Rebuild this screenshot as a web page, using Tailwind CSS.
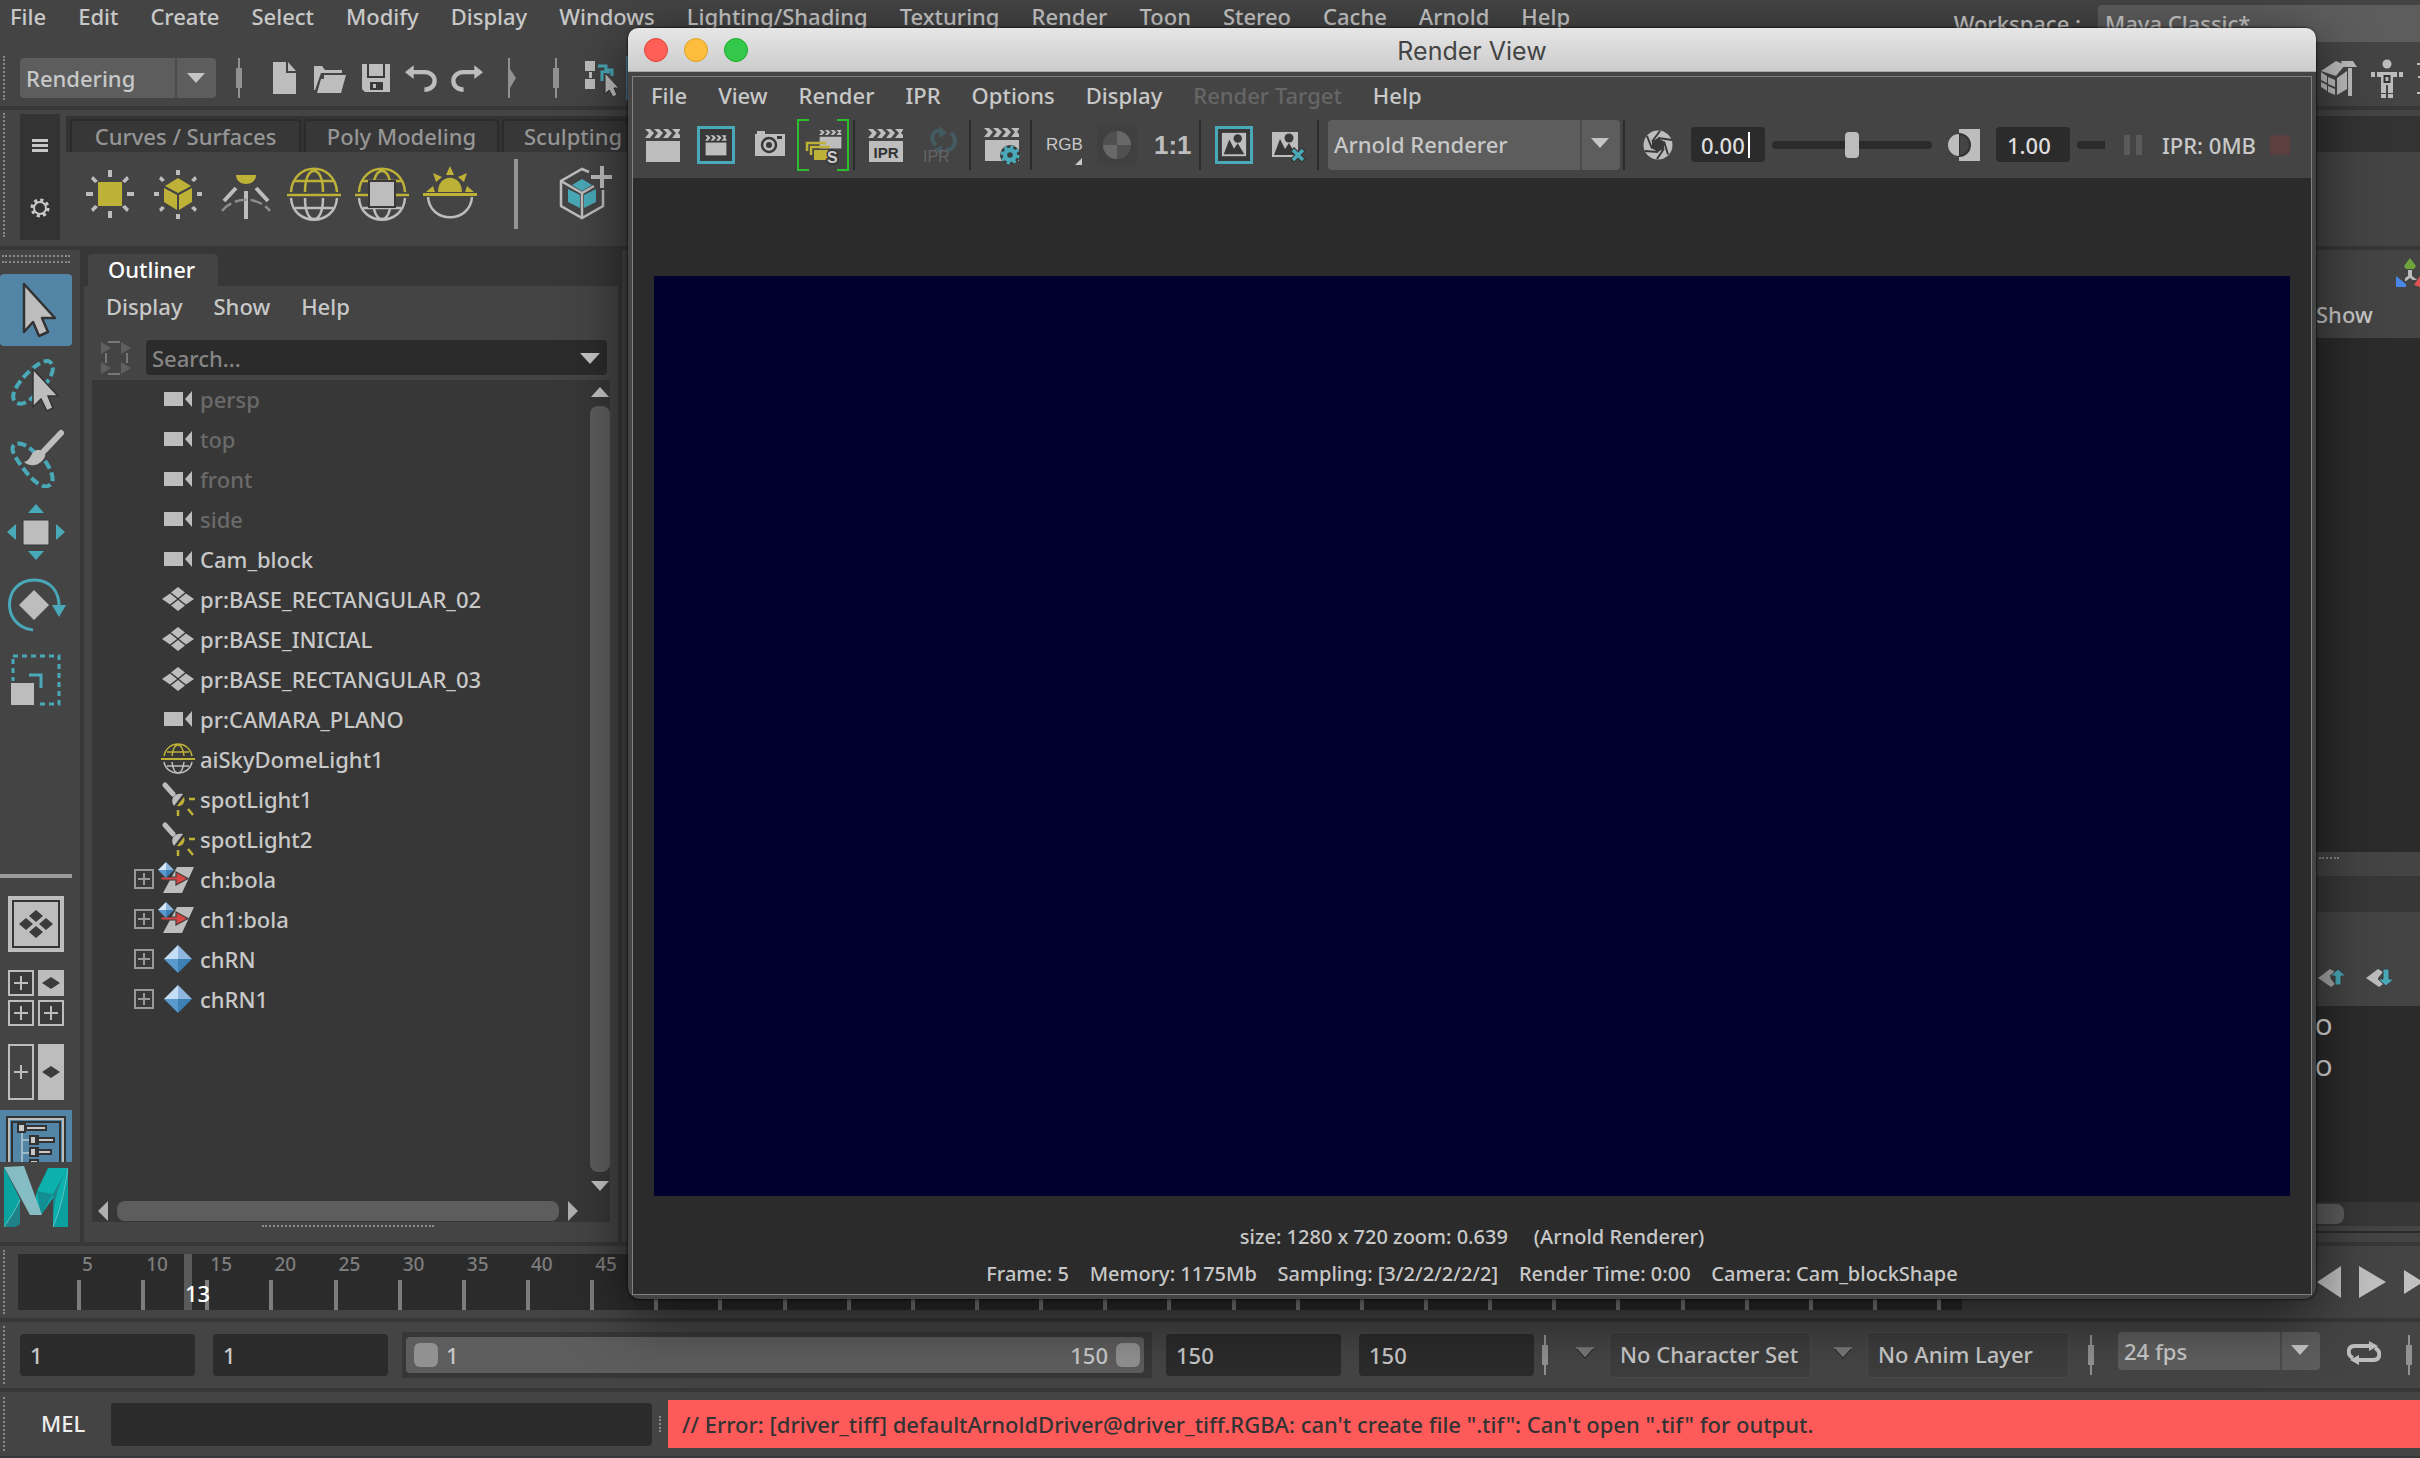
<!DOCTYPE html>
<html lang="en">
<head>
    <meta charset="UTF-8">
    <meta name="viewport" content="width=device-width, initial-scale=1.0">
    <title>Maya - Render View</title>
    <script src="https://cdn.jsdelivr.net/npm/@tailwindcss/browser@4"></script>
</head>
<body class="bg-[#444444] text-[#c8c8c8] font-['Noto_Sans',sans-serif] font-medium text-[22px] leading-8 h-screen overflow-hidden relative flex flex-col whitespace-nowrap">

    <!-- Shared icons -->
    <svg class="hidden">
        <symbol id="i-cam" viewBox="0 0 34 34"><path d="M3 10h19v14H3zM31 9v16l-7-8z" fill="#bdbdbd"/></symbol>
        <symbol id="i-mesh" viewBox="0 0 34 34"><path d="M17 5l7 5.500-7 5.500-7-5.500zM9 11.500l7 5.500-7 5.500L1 17zM25 11.500l8 5.500-8 5.500-7-5.500zM17 18l7 5.500-7 5.500-7-5.500z" fill="#bdbdbd"/></symbol>
        <symbol id="i-dome" viewBox="0 0 56 56"><g fill="none" stroke-width="2.500"><path d="M5 26C7 -5 49 -5 51 26M8 15h40M19 26c0-14 4-21 9-21s9 7 9 21" stroke="#beb138"/><path d="M5 32C7 61 49 61 51 32M9 42h38M19 32c0 14 4 21 9 21s9-7 9-21" stroke="#bdbdbd"/><path d="M1 29h54" stroke="#beb138"/></g></symbol>
        <symbol id="i-domelight" viewBox="0 0 34 34"><g fill="none" stroke-width="1.500"><path d="M3 14C6-2 28-2 31 14M6 10h22M11 14c1-8 3-11 6-11s5 3 6 11" stroke="#beb138"/><path d="M3 20c3 15 25 15 28 0M6 24h22M11 20c1 8 3 11 6 11s5-3 6-11" stroke="#bdbdbd"/><path d="M-1 17h36" stroke="#beb138" stroke-width="2"/></g></symbol>
        <symbol id="i-spot" viewBox="0 0 34 34"><path d="M4 3l8 9" stroke="#bdbdbd" stroke-width="5" stroke-linecap="round"/><path d="M22 12L13 24c-5-7 1-14 9-12z" fill="#bdbdbd"/><path d="M23 15l-7 9c5 1 9-4 7-9z" fill="#beb138"/><path d="M28 17h6M17 28v6M27 27l5 6" stroke="#beb138" stroke-width="2.500"/></symbol>
        <symbol id="i-gem" viewBox="0 0 34 34"><path d="M17 3v14H3z" fill="#c5def5"/><path d="M17 3l14 14H17z" fill="#8fb6dd"/><path d="M3 17h14v14z" fill="#5a99cc"/><path d="M17 17h14L17 31z" fill="#3d80b8"/></symbol>
        <symbol id="i-ref" viewBox="-3 -1 37 34"><path d="M16 4h17L21 30H2z" fill="#bdbdbd"/><path d="M0 14h15V9l12 6.500L15 22v-5H0z" fill="#d64541" stroke="#3c3c3c" stroke-width="1.200"/><path d="M5-1v8h-8z" fill="#d4e8fa"/><path d="M5-1l8 8H5z" fill="#8fb6dd"/><path d="M-3 7h8v8z" fill="#5a99cc"/><path d="M5 7h8l-8 8z" fill="#3d80b8"/></symbol>
        <symbol id="i-plus" viewBox="0 0 20 20"><path d="M1 1h18v18H1zM4 10h12M10 4v12" fill="none" stroke="#999" stroke-width="2"/></symbol>
        <symbol id="i-clap" viewBox="0 0 36 36"><path d="M1 14h34v21H1z" fill="#bdbdbd"/><path d="M0 2h5l4 4-4 5H0l4-5zM9 2h5l4 4-4 5H9l4-5zM18 2h5l4 4-4 5h-5l4-5zM27 2h8v1l-2 3 2 2v3h-8l4-5z" fill="#bdbdbd"/></symbol>
        <symbol id="i-down" viewBox="0 0 20 12"><path d="M0 0h20L10 11z" fill="#c4c4c4"/></symbol>
        <symbol id="i-grab" viewBox="0 0 8 40"><path d="M3 0h2v10h2v20H5v10H3V30H1V10h2z" fill="#919191"/></symbol>
        <symbol id="i-photo" viewBox="0 0 30 30"><path d="M2 2h26v25H2z" fill="#bdbdbd"/><path d="M4 25l6-16 5 10 4-6 7 12z" fill="#383838"/><circle cx="19" cy="8" r="4.500" fill="#383838"/></symbol>
        <symbol id="i-arrow" viewBox="0 0 40 56"><path d="M4 2v48l9-10 6 14 9-4-6-14h13z" fill="#bdbdbd" stroke="#333" stroke-width="2.500" stroke-linejoin="round"/></symbol>
    </svg>

    <!-- Main menu bar -->
    <header class="h-[42px] shrink-0 flex items-start">
        <nav class="flex gap-8 pl-[10px]">
            <button>File</button><button>Edit</button><button>Create</button><button>Select</button><button>Modify</button><button>Display</button><button>Windows</button><button>Lighting/Shading</button><button>Texturing</button><button>Render</button><button>Toon</button><button>Stereo</button><button>Cache</button><button>Arnold</button><button>Help</button>
        </nav>
        <label for="workspace" class="ml-auto mr-[17px] mt-[7px]">Workspace :</label>
        <select id="workspace" class="appearance-none w-[322px] h-[37px] mt-[5px] pl-[7px] pb-[2px] bg-[#5d5d5d] rounded-l"><option>Maya Classic*</option></select>
    </header>

    <!-- Status line -->
    <div class="h-[68px] shrink-0 flex items-center pt-[8px] pb-[1px] border-b-4 border-[#373737]">
        <i class="ml-[3px] mr-[15px] h-[44px] border-l-2 border-dotted border-[#888]"></i>
        <div class="relative w-[196px] h-10">
            <select aria-label="Menu set" class="appearance-none w-full h-full pl-[6px] bg-[#5d5d5d] rounded"><option>Rendering</option></select>
            <svg class="absolute right-[11px] top-[15px] w-[18px] h-[11px] pointer-events-none"><use href="#i-down"/></svg>
            <i class="absolute right-[39px] top-0 h-10 w-[2px] bg-[#4b4b4b]"></i>
        </div>
        <svg class="ml-[19px] w-2 h-10"><use href="#i-grab"/></svg>
        <div class="flex items-center gap-3 ml-[27px]">
            <button aria-label="New scene"><svg class="w-[30px] h-9" viewBox="0 0 30 36"><path d="M3 2h13v11h10v21H3zM18 2l8 9h-8z" fill="#bdbdbd"/></svg></button>
            <button aria-label="Open scene"><svg class="w-[34px] h-9" viewBox="0 0 34 36"><path d="M2 6h8l3 4h17v3H9L3 30H2zM12 15h22l-5 18H5l4-14h3z" fill="#bdbdbd"/></svg></button>
            <button aria-label="Save scene"><svg class="w-[34px] h-9" viewBox="0 0 34 36"><path d="M4 4h28v28H7l-3-3z" fill="#bdbdbd"/><path d="M9 4h2v12h14V4h2v14H9zM12 22h13v8H12z" fill="#3a3a3a"/><path d="M15 24h3v4h-3z" fill="#bdbdbd"/></svg></button>
            <button aria-label="Undo"><svg class="w-[34px] h-9" viewBox="0 0 35 36"><path d="M9 12h12c14 0 14 18 0 18" fill="none" stroke="#bdbdbd" stroke-width="4.500"/><path d="M1 12l9-7v14z" fill="#bdbdbd"/></svg></button>
            <button aria-label="Redo"><svg class="w-[34px] h-9" viewBox="0 0 35 36"><path d="M26 12H14C0 12 0 30 14 30" fill="none" stroke="#bdbdbd" stroke-width="4.500"/><path d="M34 12l-9-7v14z" fill="#bdbdbd"/></svg></button>
        </div>
        <svg class="ml-6 w-2 h-10" viewBox="0 0 8 40"><path d="M0 0h2v40H0zM2 11l6 9-6 10z" fill="#919191"/></svg>
        <svg class="ml-[36px] w-2 h-10"><use href="#i-grab"/></svg>
        <button aria-label="Select by hierarchy" class="ml-[24px]"><svg class="w-9 h-10" viewBox="0 0 36 40"><path d="M1 3h10v10H1zM1 21h10v10H1zM5 14h3v6H5z" fill="#bdbdbd"/><path d="M14 8h8v4h6v6M18 23v-9h8" fill="none" stroke="#49a9b8" stroke-width="3"/><path d="M21 15v21l4-4 4 7 4-2-3-7h5z" fill="#bdbdbd" stroke="#333"/></svg></button>
        <i class="ml-[6px] w-4 h-[44px] bg-[#5285a6]"></i>
        <div class="ml-auto flex gap-3">
            <button aria-label="Modeling toolkit"><svg class="w-9 h-10" viewBox="0 0 36 40"><path d="M0 13L15 3l9 4-9 11z" fill="#bdbdbd"/><path d="M0 14l6 4v7l-6-3zM7 19l7 3v7l-7-3zM0 24l6 3v6l-6-4zM7 28l7 3v6l-7-3zM16 20l10-7v18l-10 6zM27 10h4v28h-4zM20 3h12l4 6H22z" fill="#bdbdbd"/></svg></button>
            <button aria-label="Human IK"><svg class="w-9 h-10" viewBox="0 0 36 40"><circle cx="18" cy="6" r="4.500" fill="#bdbdbd"/><path d="M2 14h4v5H2zM8 14h20v5h-4v16h-5v-8h-2v8h-5V19H8zM30 14h4v5h-4zM12 36h5v4h-5zM19 36h5v4h-5z" fill="#bdbdbd"/><path d="M15.500 18h5v6h-5z" fill="#bdbdbd" stroke="#333" stroke-width="2"/></svg></button>
            <svg class="w-[3px] h-10" viewBox="0 0 3 40"><path d="M0 5h3v2H0zM1 18h2v2H1zM0 34h3v2H0z" fill="#bdbdbd"/></svg>
        </div>
    </div>

    <!-- Shelf -->
    <div class="h-[140px] shrink-0 flex border-b-4 border-[#373737]">
        <i class="ml-[3px] mt-[3px] mr-[15px] h-[124px] border-l-2 border-dotted border-[#888]"></i>
        <div class="w-10 h-[126px] mt-1 mr-[6px] bg-[#333333] flex flex-col items-center pt-6 gap-[46px]">
            <button aria-label="Shelf menu"><svg class="w-4 h-[14px]" viewBox="0 0 16 14"><path d="M0 1h16v3H0zM0 6h16v3H0zM0 11h16v3H0z" fill="#c8c8c8"/></svg></button>
            <button aria-label="Shelf settings"><svg class="w-5 h-5" viewBox="0 0 20 20"><circle cx="10" cy="10" r="8" fill="none" stroke="#c8c8c8" stroke-width="3" stroke-dasharray="3.200 3.080"/><circle cx="10" cy="10" r="6" fill="#333" stroke="#c8c8c8" stroke-width="2"/></svg></button>
        </div>
        <div class="flex-1 min-w-0">
            <div class="mt-[6px] h-9 bg-[#333333] pl-1 pt-[3px] flex gap-[3px] text-[#959595] leading-7 [&>button]:pb-[2px]">
                <button class="w-[231px] border-2 border-b-0 border-[#2b2b2b] bg-[#373737] rounded-t">Curves / Surfaces</button>
                <button class="w-[195px] border-2 border-b-0 border-[#2b2b2b] bg-[#373737] rounded-t">Poly Modeling</button>
                <button class="w-[195px] border-2 border-b-0 border-[#2b2b2b] bg-[#373737] rounded-t text-left pl-5">Sculpting</button>
            </div>
            <div class="h-[84px] flex items-center gap-3 pl-4">
                <button aria-label="Ambient light"><svg class="w-14 h-14" viewBox="0 0 56 56"><path d="M16 16h24v24H16z" fill="#beb138"/><path d="M26 4h4v7h-4zM26 45h4v7h-4zM4 26h7v4H4zM45 26h7v4h-7zM11 10l5 5-3 2-4-4zM45 10l-5 5 3 2 4-4zM11 46l5-5-3-2-4 4zM45 46l-5-5 3-2 4 4z" fill="#bdbdbd"/></svg></button>
                <button aria-label="Volume light"><svg class="w-14 h-14" viewBox="0 0 56 56"><path d="M28 12l13 8-13 7-13-7zM14 22l13 7v15l-13-8zM42 22l-13 7v15l13-8z" fill="#beb138"/><path d="M26 4h4v5h-4zM26 48h4v5h-4zM4 26h5v4H4zM47 26h5v4h-5zM11 10l4 4-3 2-3-3zM45 10l-4 4 3 2 3-3zM11 46l4-4-3-2-3 3zM45 46l-4-4 3-2 3 3z" fill="#bdbdbd"/></svg></button>
                <button aria-label="Spot light"><svg class="w-14 h-14" viewBox="0 0 56 56"><path d="M18 9h20c0 12-20 12-20 0z" fill="#beb138"/><path d="M28 25v28M18 22L6 35M38 22l12 13" stroke="#bdbdbd" stroke-width="4"/><path d="M4 45c12-15 36-15 48 0" fill="none" stroke="#8c8c8c" stroke-width="2.500" stroke-dasharray="12 4"/></svg></button>
                <button aria-label="Sky dome light"><svg class="w-14 h-14"><use href="#i-dome"/></svg></button>
                <button aria-label="Area light"><svg class="w-14 h-14"><use href="#i-dome"/><path d="M15 15h26v26H15z" fill="#bdbdbd" stroke="#383838" stroke-width="2"/></svg></button>
                <button aria-label="Physical sky"><svg class="w-14 h-14" viewBox="0 0 56 56"><path d="M1 27h54v3H1zM16 26c0-19 24-19 24 0zM24 9l4-9 4 9zM11 7l9 4-6 5zM45 7l-9 4 6 5zM4 26l7-6 2 6zM52 26l-7-6-2 6z" fill="#beb138"/><path d="M6 31c2 27 42 27 44 0" fill="none" stroke="#bdbdbd" stroke-width="2.500"/></svg></button>
                <i class="ml-6 w-1 h-[70px] bg-[#959595]"></i>
                <button aria-label="Create stand-in" class="ml-[26px]"><svg class="w-14 h-14" viewBox="0 0 56 56"><path d="M26 13l10 6-10 6-10-6zM12 23l12 6v13l-12-6zM40 23l-12 6v13l12-6z" fill="#49a9b8"/><path d="M33 6l-7-3L5 15v25l21 12 21-12V24M5 15l21 12 12-7M26 27v25" fill="none" stroke="#bdbdbd" stroke-width="2.500"/><path d="M46 0v22M35 11h21" stroke="#bdbdbd" stroke-width="4"/></svg></button>
            </div>
        </div>
    </div>

    <!-- Workspace -->
    <main class="flex-1 min-h-0 flex">
        <!-- Toolbox -->
        <div class="w-[84px] shrink-0 border-r-4 border-[#373737] flex flex-col pt-[5px]">
            <i class="ml-[2px] w-[68px] shrink-0 border-t-2 border-dotted border-[#888]"></i>
            <i class="ml-[2px] mt-1 mb-[11px] w-[68px] shrink-0 border-t-2 border-dotted border-[#888]"></i>
            <div class="w-[72px] flex flex-col gap-[2px] [&>button]:h-[72px] [&>button]:flex [&>button]:items-center [&>button]:justify-center">
                <button aria-label="Select tool" class="bg-[#5285a6] rounded-sm pl-2"><svg class="w-10 h-14"><use href="#i-arrow"/></svg></button>
                <button aria-label="Lasso tool"><svg class="w-[60px] h-[60px]" viewBox="0 0 60 60"><path d="M30 40C16 56 4 50 8 38S36 2 44 8s-2 20-8 26" fill="none" stroke="#49a9b8" stroke-width="4" stroke-dasharray="9 4"/><path d="M27 15v38l8-8 6 12 6-3-5-12h10z" fill="#bdbdbd" stroke="#333" stroke-width="1.500"/></svg></button>
                <button aria-label="Paint selection"><svg class="w-[60px] h-[60px]" viewBox="0 0 60 60"><path d="M30 26C16 10 2 14 8 26s24 36 34 32 2-20-8-32" fill="none" stroke="#49a9b8" stroke-width="4" stroke-dasharray="9 4"/><path d="M55 5L38 23" stroke="#bdbdbd" stroke-width="6" stroke-linecap="round"/><path d="M31 22c10-1 10 6 5 11s-12 6-18 1c7-1 6-10 13-12z" fill="#bdbdbd"/></svg></button>
                <button aria-label="Move tool"><svg class="w-[60px] h-[60px]" viewBox="0 0 60 60"><path d="M17 18h26v25H17z" fill="#bdbdbd" stroke="#363636"/><path d="M30 2l8 9H22zM30 58l8-9H22zM1 30l9-8v16zM59 30l-9-8v16z" fill="#49a9b8"/></svg></button>
                <button aria-label="Rotate tool"><svg class="w-[60px] h-[60px]" viewBox="0 0 60 60"><path d="M27 54C-6 50-3 4 28 4c18 0 25 13 25 26" fill="none" stroke="#49a9b8" stroke-width="3"/><path d="M46 29h14l-7 12z" fill="#49a9b8"/><path d="M28 14l15 15-15 15-15-15z" fill="#bdbdbd"/></svg></button>
                <button aria-label="Scale tool"><svg class="w-[60px] h-[60px]" viewBox="0 0 60 60"><path d="M7 6h46v48H7z" fill="none" stroke="#49a9b8" stroke-width="3" stroke-dasharray="5 4"/><path d="M3 31h27v26H3z" fill="#444"/><path d="M5 33h23v22H5z" fill="#bdbdbd"/><path d="M23 25h12v13" fill="none" stroke="#49a9b8" stroke-width="3"/></svg></button>
            </div>
            <i class="mt-[158px] w-[72px] h-1 shrink-0 bg-[#9a9a9a]"></i>
            <div class="w-[72px] mt-[18px] flex flex-col gap-[18px] items-center">
                <button aria-label="Single pane"><svg class="w-14 h-14" viewBox="0 0 56 56"><path d="M0 0h56v56H0z" fill="#bdbdbd"/><path d="M5 5h46v46H5z" fill="none" stroke="#363636" stroke-width="2"/><path d="M28 14l7 6-7 6-7-6zM18 22l7 6-7 6-7-6zM38 22l7 6-7 6-7-6zM28 30l7 6-7 6-7-6z" fill="#3b3b3b"/></svg></button>
                <button aria-label="Four panes"><svg class="w-14 h-14" viewBox="0 0 56 56"><path d="M1 1h24v24H1zM1 31h24v24H1zM31 31h24v24H31z" fill="#3b3b3b" stroke="#bdbdbd" stroke-width="2"/><path d="M30 0h26v26H30z" fill="#bdbdbd"/><path d="M43 7l9 6-9 6-9-6z" fill="#3b3b3b"/><path d="M6 13h14M13 6v14M6 43h14M13 36v14M36 43h14M43 36v14" stroke="#bdbdbd" stroke-width="2"/></svg></button>
                <button aria-label="Two panes"><svg class="w-14 h-14" viewBox="0 0 56 56"><path d="M1 1h24v54H1z" fill="#444" stroke="#bdbdbd" stroke-width="2"/><path d="M30 0h26v56H30z" fill="#bdbdbd"/><path d="M43 22l9 6-9 6-9-6z" fill="#3b3b3b"/><path d="M6 28h14M13 21v14" stroke="#bdbdbd" stroke-width="2"/></svg></button>
            </div>
            <button aria-label="Outliner pane" class="mt-[10px] w-[72px] h-[52px] shrink-0 bg-[#5285a6] flex justify-center items-end"><svg class="w-[60px] h-[46px]" viewBox="0 0 60 46"><path d="M1 46V1h58v45M6 46V6h48v40" fill="none" stroke="#333" stroke-width="2"/><path d="M3 46V3h54v43" fill="none" stroke="#bdbdbd" stroke-width="2"/><path d="M16 16v30M16 24h10M16 37h10" stroke="#9fb8c8" stroke-width="2"/><g fill="#c8c8c8" stroke="#333" stroke-width="2"><path d="M20 10h20v4H20zM30 22h18v4H30zM30 34h15v4H30zM12 8h7v8h-7zM24 20h8v8h-8zM24 32h8v8h-8zM24 44h8v4h-8z"/></g></svg></button>
            <svg class="mt-1 ml-1 w-16 h-[62px] shrink-0" viewBox="0 0 64 62">
                <path d="M0 1l16 32v25l-5 3H0z" fill="#0aa3a1"/>
                <path d="M0 61c6-9 12-18 16-27v24l-5 3z" fill="#1f8188"/>
                <path d="M44 2h20v59H49V32L37 49H28l5-24z" fill="#0cb0ad"/>
                <path d="M49 28L37 49l-4-24z" fill="#118f92"/>
                <path d="M64 2C52 22 49 40 49 61V28z" fill="#1d858b"/>
                <path d="M64 2c-3 22-8 42-15 59h15z" fill="#0ba09f"/>
                <path d="M0 61c6-9 12-18 16-27M64 2c-3 22-8 42-15 59" fill="none" stroke="#5cc4c4"/>
                <path d="M0 1l20-1 18 49H26z" fill="#86bcc3"/>
            </svg>
        </div>

        <!-- Outliner -->
        <section class="w-[534px] shrink-0 bg-[#373737] flex flex-col pt-1">
            <h2 class="ml-1 w-[130px] h-8 bg-[#444444] rounded-t text-white pl-5 leading-[30px]">Outliner</h2>
            <div class="flex-1 min-h-0 bg-[#444444] pl-2 pr-2 flex flex-col">
                <nav class="flex gap-[31px] pl-[14px] pt-1"><button>Display</button><button>Show</button><button>Help</button></nav>
                <div class="flex items-center mt-[18px] pl-[9px] pr-[3px]">
                    <svg class="w-[30px] h-[34px]" viewBox="0 0 30 34"><path d="M0 1l10 6-10 6zM20 1l10 6-10 6zM0 21l10 6-10 6zM20 21l10 6-10 6z" fill="#5f5f5f"/><path d="M7 1h12M7 33h12M5 12v10M26 12v10" stroke="#777" stroke-width="2"/></svg>
                    <div class="relative flex-1 ml-[15px]">
                        <input type="text" placeholder="Search..." aria-label="Search" class="w-full h-[35px] bg-[#2b2b2b] rounded-sm pl-[6px] placeholder:text-[#858585]">
                        <svg class="absolute right-[7px] top-[13px] w-5 h-3"><use href="#i-down"/></svg>
                    </div>
                </div>
                <div class="mt-[5px] flex-1 min-h-0 bg-[#373737] flex">
                    <ul class="flex-1 min-w-0 [&>li]:h-10 [&>li]:pb-[2px] [&>li]:flex [&>li]:items-center [&>li]:pl-[69px] [&>li>svg]:w-[34px] [&>li>svg]:h-[34px] [&>li>svg]:mr-[5px] [&>li>svg]:overflow-visible">
                        <li class="text-[#6a6a6a]"><svg><use href="#i-cam"/></svg>persp</li>
                        <li class="text-[#6a6a6a]"><svg><use href="#i-cam"/></svg>top</li>
                        <li class="text-[#6a6a6a]"><svg><use href="#i-cam"/></svg>front</li>
                        <li class="text-[#6a6a6a]"><svg><use href="#i-cam"/></svg>side</li>
                        <li><svg><use href="#i-cam"/></svg>Cam_block</li>
                        <li><svg><use href="#i-mesh"/></svg>pr:BASE_RECTANGULAR_02</li>
                        <li><svg><use href="#i-mesh"/></svg>pr:BASE_INICIAL</li>
                        <li><svg><use href="#i-mesh"/></svg>pr:BASE_RECTANGULAR_03</li>
                        <li><svg><use href="#i-cam"/></svg>pr:CAMARA_PLANO</li>
                        <li><svg><use href="#i-domelight"/></svg>aiSkyDomeLight1</li>
                        <li><svg><use href="#i-spot"/></svg>spotLight1</li>
                        <li><svg><use href="#i-spot"/></svg>spotLight2</li>
                        <li class="relative"><button aria-label="Expand ch:bola" class="absolute left-[42px]"><svg class="w-5 h-5"><use href="#i-plus"/></svg></button><svg><use href="#i-ref" x="-3" width="37" height="34"/></svg>ch:bola</li>
                        <li class="relative"><button aria-label="Expand ch1:bola" class="absolute left-[42px]"><svg class="w-5 h-5"><use href="#i-plus"/></svg></button><svg><use href="#i-ref" x="-3" width="37" height="34"/></svg>ch1:bola</li>
                        <li class="relative"><button aria-label="Expand chRN" class="absolute left-[42px]"><svg class="w-5 h-5"><use href="#i-plus"/></svg></button><svg><use href="#i-gem"/></svg>chRN</li>
                        <li class="relative"><button aria-label="Expand chRN1" class="absolute left-[42px]"><svg class="w-5 h-5"><use href="#i-plus"/></svg></button><svg><use href="#i-gem"/></svg>chRN1</li>
                    </ul>
                    <div class="w-5 flex flex-col items-center py-[6px]">
                        <svg class="w-[18px] h-[11px] rotate-180"><use href="#i-down"/></svg>
                        <i class="flex-1 w-5 my-[9px] rounded-lg bg-[#5d5d5d]"></i>
                        <svg class="w-[18px] h-[11px]"><use href="#i-down"/></svg>
                    </div>
                </div>
                <div class="h-6 bg-[#373737] flex items-end pb-[1px] pl-[6px] pr-8 gap-[9px]">
                    <svg class="w-[10px] h-5" viewBox="0 0 10 20"><path d="M10 0v20L0 10z" fill="#b0b0b0"/></svg>
                    <i class="flex-1 h-5 rounded-lg bg-[#5d5d5d]"></i>
                    <svg class="w-[10px] h-5" viewBox="0 0 10 20"><path d="M0 0v20l10-10z" fill="#b0b0b0"/></svg>
                </div>
                <i class="mt-[3px] mb-[15px] ml-[170px] w-[172px] border-t-2 border-dotted border-[#8c8c8c]"></i>
            </div>
        </section>
        <div class="flex-1 bg-[#444444] border-l-4 border-[#373737]"></div>

        <!-- Right dock -->
        <section class="w-[106px] shrink-0 flex flex-col">
            <div class="h-[88px] relative">
                <svg class="absolute right-0 top-2 w-6 h-[30px]" viewBox="0 0 24 30"><path d="M14 0l6 8-2 3h-8l-2-3z" fill="#6fa33c"/><path d="M12 12h4v6l5 4h-4l-3-2-4 3H9v-3l3-2z" fill="#bdbdbd"/><path d="M0 18l10 8v3H0z" fill="#4a86e8"/><path d="M24 18l-6 9 6 2z" fill="#e05252"/></svg>
                <button class="absolute left-[2px] top-12">Show</button>
            </div>
            <div class="flex-1 bg-[#2b2b2b]"></div>
            <div class="h-6 pt-[5px] pl-[5px]"><i class="block w-5 border-t-2 border-dotted border-[#888]"></i></div>
            <div class="h-9 bg-[#373737]"></div>
            <div class="h-[94px] flex items-end pb-4 pl-1 gap-5">
                <button aria-label="Move layer up"><svg class="w-7 h-6" viewBox="0 0 28 24"><path d="M0 12L12 3l5 3-5 6 5 6-4 3z" fill="#a8a8a8"/><path d="M20 3l8 7h-5v9h-6v-9h-5z" fill="#49a9b8" stroke="#3c3c3c"/></svg></button>
                <button aria-label="Move layer down"><svg class="w-7 h-6" viewBox="0 0 28 24"><path d="M0 12L12 3l5 3-5 6 5 6-4 3z" fill="#bdbdbd"/><path d="M20 20l8-7h-5V3h-6v10h-5z" fill="#49a9b8" stroke="#3c3c3c"/></svg></button>
            </div>
            <div class="h-[196px] bg-[#2b2b2b] pl-[1px] leading-[41px] text-[#e0e0e0]"><p>O</p><p>O</p></div>
            <div class="h-6 bg-[#373737] py-[2px]"><i class="block w-[30px] h-5 rounded-r-lg bg-[#5d5d5d]"></i></div>
            <i class="mt-[5px] mb-[9px] h-[2px] bg-[#2b2b2b]"></i>
        </section>
    </main>

    <!-- Time slider -->
    <div class="h-20 shrink-0 flex border-y-4 border-[#373737]">
        <i class="ml-[3px] my-1 mr-[13px] border-l-2 border-dotted border-[#888]"></i>
        <div class="relative flex-1 h-14 mt-2 mr-[458px] bg-[#2b2b2b]">
            <i class="absolute left-[166px] top-0 w-2 h-14 bg-[#5a5a5a]"></i>
            <div id="ticks" class="flex pl-[60px] text-[19px] leading-5 text-[#7d7d7d]"></div>
            <span class="absolute left-[167px] top-[27px] leading-6 text-white">13</span>
        </div>
        <div class="absolute right-0 mt-5 flex items-center gap-[18px]">
            <button aria-label="Play backwards"><svg class="w-6 h-8" viewBox="0 0 24 32"><path d="M24 0v32L0 16z" fill="#c0c0c0"/></svg></button>
            <button aria-label="Play forwards"><svg class="w-[27px] h-8" viewBox="0 0 27 32"><path d="M0 0l27 16L0 32z" fill="#c0c0c0"/></svg></button>
            <button aria-label="Next key"><svg class="w-4 h-6" viewBox="0 0 16 24"><path d="M0 0l16 10v4L0 24z" fill="#c0c0c0"/></svg></button>
        </div>
    </div>

    <!-- Range slider -->
    <div class="h-[66px] shrink-0 flex items-center">
        <i class="ml-[3px] mr-[15px] h-[58px] border-l-2 border-dotted border-[#888]"></i>
        <input aria-label="Animation start" value="1" class="w-[175px] h-[42px] pb-[1px] bg-[#2b2b2b] rounded-sm pl-[10px]">
        <input aria-label="Playback start" value="1" class="w-[175px] h-[42px] pb-[1px] ml-[18px] bg-[#2b2b2b] rounded-sm pl-[10px]">
        <div class="flex-1 ml-[14px] mr-[14px] h-[46px] bg-[#373737] p-1 pr-2">
            <div class="h-9 mt-[1px] rounded bg-[#5d5d5d] flex items-center pl-2 pr-1 gap-2"><i class="w-6 h-6 rounded-md bg-[#919191]"></i><span>1</span><span class="ml-auto">150</span><i class="w-6 h-6 rounded-md bg-[#919191]"></i></div>
        </div>
        <input aria-label="Playback end" value="150" class="w-[175px] h-[42px] pb-[1px] bg-[#2b2b2b] rounded-sm pl-[10px]">
        <input aria-label="Animation end" value="150" class="w-[175px] h-[42px] pb-[1px] ml-[18px] bg-[#2b2b2b] rounded-sm pl-[10px]">
        <svg class="ml-[7px] w-2 h-10"><use href="#i-grab"/></svg>
        <button aria-label="Character set menu" class="ml-[26px] mb-1"><svg class="w-5 h-3" viewBox="0 0 20 12"><path d="M1 1h18l-9 10z" fill="#777" stroke="#1c1c1c"/><path d="M1 1h18" stroke="#aaa"/></svg></button>
        <button class="ml-[14px] w-[202px] h-[46px] pb-[2px] border border-[#4b4b4b] bg-[#3d3d3d] rounded-sm text-left pl-[10px]">No Character Set</button>
        <button aria-label="Anim layer menu" class="ml-[22px] mb-1"><svg class="w-5 h-3" viewBox="0 0 20 12"><path d="M1 1h18l-9 10z" fill="#777" stroke="#1c1c1c"/><path d="M1 1h18" stroke="#aaa"/></svg></button>
        <button class="ml-[14px] w-[202px] h-[46px] pb-[2px] border border-[#4b4b4b] bg-[#3d3d3d] rounded-sm text-left pl-[10px]">No Anim Layer</button>
        <svg class="ml-[18px] w-2 h-10"><use href="#i-grab"/></svg>
        <div class="relative ml-[23px] mb-2 w-[202px] h-[38px]">
            <select aria-label="Frame rate" class="appearance-none w-full h-full pl-[6px] bg-[#5d5d5d] rounded"><option>24 fps</option></select>
            <svg class="absolute right-[11px] top-[13px] w-[18px] h-[11px] pointer-events-none"><use href="#i-down"/></svg>
            <i class="absolute right-[38px] top-0 h-[38px] w-[2px] bg-[#4b4b4b]"></i>
        </div>
        <button aria-label="Loop" class="ml-[27px] mr-6 mb-1"><svg class="w-[34px] h-6" viewBox="0 0 34 24"><path d="M6 17C0 14 0 5 8 5h16M28 7c6 3 6 12-2 12H10" fill="none" stroke="#bdbdbd" stroke-width="4"/><path d="M22 0l9 5-9 5zM12 14l-9 5 9 5z" fill="#bdbdbd"/></svg></button>
        <svg class="mr-[7px] w-2 h-10"><use href="#i-grab"/></svg>
    </div>

    <!-- Command line -->
    <div class="h-[70px] shrink-0 flex items-center border-t-4 border-b-2 border-[#373737]">
        <i class="ml-[3px] mr-9 h-[54px] border-l-2 border-dotted border-[#888]"></i>
        <label for="mel" class="w-[70px] pb-[2px] text-[#eeeeee]">MEL</label>
        <input id="mel" class="w-[541px] h-[43px] bg-[#2b2b2b] rounded-sm pl-[10px]">
        <i class="mx-[7px] h-4 border-l-2 border-dotted border-[#888]"></i>
        <output class="flex-1 h-12 bg-[#ff5a5a] text-[#333333] pl-[14px] leading-[48px]">// Error: [driver_tiff] defaultArnoldDriver@driver_tiff.RGBA: can't create file ".tif": Can't open ".tif" for output.</output>
    </div>

    <!-- Render View window -->
    <div class="absolute left-[628px] right-[104px] top-7 bottom-[159px] rounded-[12px] bg-[#444444] shadow-[0_16px_60px_rgba(0,0,0,0.6),0_0_2px_1px_rgba(0,0,0,0.5)] flex flex-col px-1 pb-1">
        <div class="-mx-1 h-11 shrink-0 relative rounded-t-[10px] bg-linear-to-b from-[#e6e6e6] to-[#cccccc] border-b border-[#a8a8a8] flex items-center pl-4 gap-4">
            <button aria-label="Close" class="w-6 h-6 rounded-full bg-[#ff5f57] border border-[#e0443e]"></button>
            <button aria-label="Minimize" class="w-6 h-6 rounded-full bg-[#ffbd3e] border border-[#dea123]"></button>
            <button aria-label="Zoom" class="w-6 h-6 rounded-full bg-[#34c84a] border border-[#1aab29]"></button>
            <h1 class="absolute inset-x-0 pt-[2px] text-center text-[#444444] text-[25px] font-normal font-['Inter',sans-serif] pointer-events-none">Render View</h1>
        </div>
        <div class="mt-1 flex-1 min-h-0 border border-[#828282] flex flex-col">
            <nav class="flex gap-[31px] pl-[18px] pt-[1px] h-[34px] shrink-0">
                <button>File</button><button>View</button><button>Render</button><button>IPR</button><button>Options</button><button>Display</button><button disabled class="text-[#666666]">Render Target</button><button>Help</button>
            </nav>
            <div class="h-[67px] shrink-0 flex items-center pl-3 [&>i]:w-[2px] [&>i]:h-[50px] [&>i]:bg-[#2b2b2b] [&>*]:shrink-0">
                <button aria-label="Render current frame"><svg class="w-9 h-9"><use href="#i-clap"/></svg></button>
                <button aria-label="Render region" class="ml-4 w-[38px] h-[38px] border-3 border-[#49a9b8] bg-[#383838] flex items-center justify-center"><svg class="w-[22px] h-[22px]" viewBox="0 0 36 36"><use href="#i-clap"/></svg></button>
                <button aria-label="Snapshot" class="ml-[18px]"><svg class="w-[34px] h-8" viewBox="0 0 34 32"><path d="M2 5h2V2h8v3h20v22H2z" fill="#bdbdbd"/><circle cx="16" cy="16" r="7" fill="none" stroke="#383838" stroke-width="2.500"/><circle cx="16" cy="16" r="3" fill="#383838"/><path d="M24 7h5v3h-5z" fill="#383838"/></svg></button>
                <button aria-label="Render sequence" class="ml-[10px]"><svg class="w-[52px] h-[52px]" viewBox="0 0 52 52"><path d="M12 1H1v50h11M40 1h11v50H40" fill="none" stroke="#2dbd2d" stroke-width="2"/><svg x="22" y="10" width="23" height="20" viewBox="0 0 36 36" preserveAspectRatio="none"><use href="#i-clap"/></svg><path d="M10 32V24h19M14 36V28h19" fill="none" stroke="#beb138" stroke-width="2.500"/><path d="M17 31h14v10H17z" fill="#beb138"/><text x="30" y="44" font-size="16" font-weight="700" font-family="Liberation Sans" fill="#ccc" stroke="#333" stroke-width="3" paint-order="stroke">S</text></svg></button>
                <i class="ml-[4px]"></i>
                <button aria-label="IPR render" class="ml-[13px]"><svg class="w-9 h-9" viewBox="0 0 36 36"><use href="#i-clap"/><text x="18" y="31" text-anchor="middle" font-size="15" font-weight="700" font-family="Liberation Sans" fill="#333">IPR</text></svg></button>
                <button aria-label="Refresh IPR" class="ml-[18px]"><svg class="w-9 h-10" viewBox="0 0 36 40"><path d="M14 20C7 14 11 4 19 6M24 25c9 0 12-11 5-17" fill="none" stroke="#435b60" stroke-width="4"/><path d="M17 1l8 7-8 5zM20 20v10l-8-5z" fill="#435b60"/><text x="1" y="37" font-size="16" font-family="Liberation Sans" fill="#656565">IPR</text></svg></button>
                <i class="ml-[11px]"></i>
                <button aria-label="Render settings" class="ml-[13px]"><svg class="w-[37px] h-10" viewBox="0 0 37 40"><use href="#i-clap" width="36" height="36" y="1"/><circle cx="26" cy="30" r="10" fill="#3a3a3a"/><circle cx="26" cy="30" r="8" fill="none" stroke="#49a9b8" stroke-width="3" stroke-dasharray="3.200 3.080"/><circle cx="26" cy="30" r="5" fill="none" stroke="#49a9b8" stroke-width="4.500"/></svg></button>
                <i class="ml-[9px]"></i>
                <button aria-label="RGB channels" class="relative ml-[14px] w-8 text-[17px] font-['Liberation_Sans_Narrow','Liberation_Sans',sans-serif] leading-8">RGB<svg class="absolute -right-1 -bottom-1 w-[7px] h-[7px]" viewBox="0 0 7 7"><path d="M7 0v7H0z" fill="#c8c8c8"/></svg></button>
                <button aria-label="Alpha channel" class="ml-[19px] w-10 h-10 bg-[#404040] flex items-center justify-center"><svg class="w-7 h-7" viewBox="0 0 28 28"><circle cx="14" cy="14" r="14" fill="#505050"/><path d="M14 14V0a14 14 0 0 1 14 14zM14 14v14A14 14 0 0 1 0 14z" fill="#686868"/></svg></button>
                <button aria-label="Real size" class="ml-[17px] w-9 text-[26px] font-bold font-['Liberation_Sans_Narrow','Liberation_Sans',sans-serif] leading-9 text-[#bdbdbd]">1:1</button>
                <i class="ml-[9px]"></i>
                <button aria-label="Keep image" class="ml-[14px] w-[38px] h-[38px] border-3 border-[#49a9b8] bg-[#383838] flex items-center justify-center"><svg class="w-7 h-7" viewBox="0 0 30 30"><use href="#i-photo"/></svg></button>
                <button aria-label="Remove image" class="ml-[17px]"><svg class="w-[36px] h-9" viewBox="0 0 36 36"><use href="#i-photo" width="30" height="30" x="0" y="3"/><path d="M22 22l12 12M34 22L22 34" stroke="#383838" stroke-width="6"/><path d="M23 23l10 10M33 23L23 33" stroke="#49a9b8" stroke-width="3.500"/></svg></button>
                <i class="ml-[11px]"></i>
                <div class="relative ml-[9px] w-[292px] h-[50px]">
                    <select aria-label="Renderer" class="appearance-none w-full h-full pl-[6px] pb-[2px] bg-[#5d5d5d] rounded"><option>Arnold Renderer</option></select>
                    <svg class="absolute right-[11px] top-[18px] w-[18px] h-[11px] pointer-events-none"><use href="#i-down"/></svg>
                    <span class="absolute right-[38px] top-0 h-[50px] w-[2px] bg-[#4b4b4b]"></span>
                </div>
                <i class="ml-[3px]"></i>
                <button aria-label="Exposure" class="ml-[18px]"><svg class="w-[30px] h-[30px]" viewBox="0 0 30 30"><circle cx="15" cy="15" r="14.500" fill="#bdbdbd"/><path d="M15 8l6 3.500v7L15 22l-6-3.500v-7z" fill="#383838"/><path d="M9 11.500L17 1M15 8l14 2M21 11.500l4 13M21 18.500L14 29M15 22L2 21M9 18.500L4 6" stroke="#383838" stroke-width="2"/></svg></button>
                <input aria-label="Exposure value" value="0.00" class="ml-[18px] w-[74px] h-[35px] bg-[#2b2b2b] rounded-sm pl-[10px] text-[#dddddd]">
                <span class="relative w-0 h-[26px]"><span class="absolute right-[15px] w-[2px] h-[26px] bg-white"></span></span>
                <input type="range" aria-label="Exposure slider" class="ml-[7px] w-40 h-2 appearance-none rounded bg-[#2b2b2b] [&::-webkit-slider-thumb]:appearance-none [&::-webkit-slider-thumb]:w-[14px] [&::-webkit-slider-thumb]:h-[26px] [&::-webkit-slider-thumb]:rounded [&::-webkit-slider-thumb]:bg-[#bdbdbd]">
                <button aria-label="Gamma" class="ml-4"><svg class="w-8 h-8" viewBox="0 0 32 32"><path d="M11 0h21v32H11z" fill="#bdbdbd"/><path d="M11 5a11 11 0 0 1 0 22z" fill="#444" stroke="#333" stroke-width="2"/><path d="M11 5a11 11 0 0 0 0 22z" fill="#bdbdbd"/></svg></button>
                <input aria-label="Gamma value" value="1.00" class="ml-4 w-[74px] h-[35px] bg-[#2b2b2b] rounded-sm pl-[11px] text-[#dddddd]">
                <span class="ml-[7px] w-7 h-2 rounded-l bg-[#2b2b2b]"></span>
                <button aria-label="Pause IPR" class="ml-[19px]"><svg class="w-[18px] h-5" viewBox="0 0 18 20"><path d="M0 0h6v20H0zM12 0h6v20h-6z" fill="#5a5a5a"/></svg></button>
                <span class="ml-5 w-[108px]">IPR: 0MB</span>
                <button aria-label="Stop IPR" class="w-5 h-5 bg-[#5c4040]"></button>
            </div>
            <div class="flex-1 min-h-0 bg-[#2b2b2b] px-[21px] pt-[98px] flex flex-col">
                <div class="flex-1 bg-[#00002f]"></div>
                <div class="pt-[22px] pb-[2px] text-center text-[20px] leading-[37px] whitespace-pre"><p>size: 1280 x 720 zoom: 0.639     (Arnold Renderer)</p><p>Frame: 5    Memory: 1175Mb    Sampling: [3/2/2/2/2/2]    Render Time: 0:00    Camera: Cam_blockShape</p></div>
            </div>
        </div>
    </div>

    <script>
        // One cell per five frames, the last one is cut short by the end of the track.
        // Frame numbers stop where the Render View window covers the track.
        const ticks = document.getElementById('ticks');
        const lastLabel = 45;
        for (let f = 5; f <= 150; f += 5) {
            const width = f === 150 ? 'w-6' : 'flex-1';
            const label = f <= lastLabel ? f : '';
            ticks.innerHTML += `<div class="${width}"><span class="block h-[26px] pl-1">${label}</span><i class="block w-1 h-[30px] -ml-px bg-[#7d7d7d]"></i></div>`;
        }
    </script>
</body>
</html>
